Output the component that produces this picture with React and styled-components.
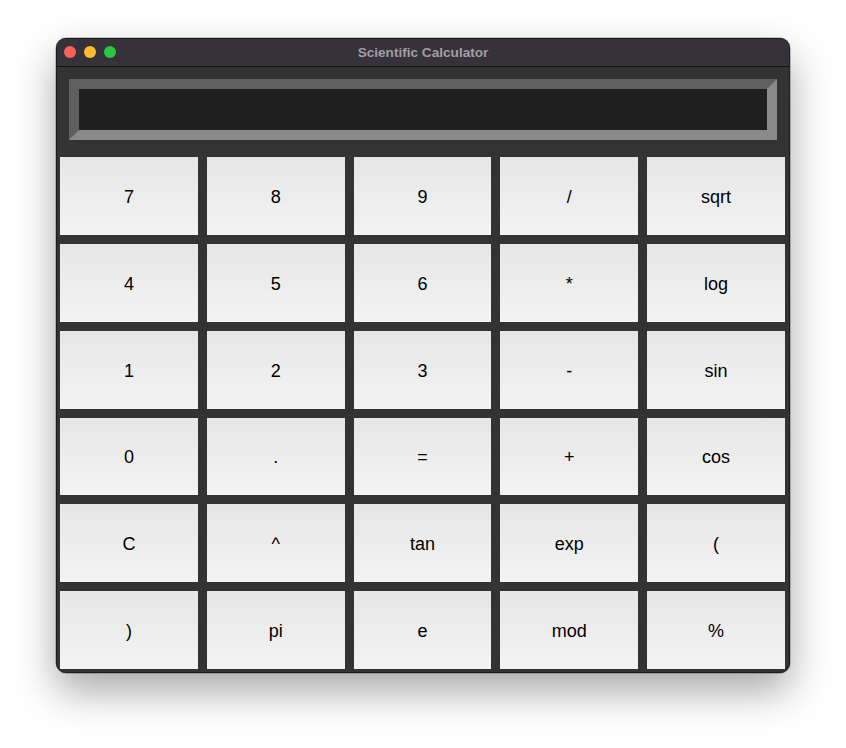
import React from "react";
import styled, { createGlobalStyle } from "styled-components";

const Global = createGlobalStyle`
  html, body { margin: 0; padding: 0; background: #ffffff; }
  body { font-family: "Liberation Sans", Arial, sans-serif; }
`;

const Stage = styled.div`
  padding: 38px 0 0 56px;
  width: 846px;
  height: 748px;
  box-sizing: border-box;
  background: #ffffff;
`;

const Window = styled.div`
  width: 734px;
  height: 635px;
  box-sizing: border-box;
  border-radius: 10px;
  background: #333333;
  border: 1px solid #1c1c1c;
  overflow: hidden;
  display: flex;
  flex-direction: column;
  box-shadow: 0 18px 40px rgba(0, 0, 0, 0.35), 0 0 0 0.5px rgba(0,0,0,0.4);
`;

const TitleBar = styled.div`
  height: 27px;
  flex: none;
  background: #37313a;
  border-bottom: 1px solid #111;
  position: relative;
  display: flex;
  align-items: center;
  justify-content: center;
`;

const Lights = styled.div`
  position: absolute;
  left: 7px;
  top: 7px;
  display: flex;
  gap: 8px;
`;

const Light = styled.span`
  width: 12px;
  height: 12px;
  border-radius: 50%;
  background: ${(p) => p.$c};
`;

const Title = styled.div`
  font-family: "Liberation Sans", Arial, sans-serif;
  font-weight: bold;
  font-size: 13.6px;
  color: #a29ea7;
`;

const Body = styled.div`
  flex: 1;
  display: flex;
  flex-direction: column;
  padding: 12px 4px 3px 3px;
`;

const Display = styled.div`
  margin: 0 8px 17px 9px;
  height: 61px;
  box-sizing: border-box;
  border-style: solid;
  border-width: 10px;
  border-color: #5f5f5f #8a8a8a #8a8a8a #5f5f5f;
  background: #1f1f1f;
`;

const Grid = styled.div`
  flex: 1;
  display: grid;
  grid-template-columns: repeat(5, 1fr);
  grid-template-rows: repeat(6, 1fr);
  gap: 9px;
`;

const Key = styled.button`
  border: none;
  margin: 0;
  padding: 3px 0 0;
  background: linear-gradient(#e6e6e6, #f3f3f3);
  font-family: "Liberation Sans", Arial, sans-serif;
  font-size: 18px;
  color: #000;
  display: flex;
  align-items: center;
  justify-content: center;
`;

const keys = [
  "7", "8", "9", "/", "sqrt",
  "4", "5", "6", "*", "log",
  "1", "2", "3", "-", "sin",
  "0", ".", "=", "+", "cos",
  "C", "^", "tan", "exp", "(",
  ")", "pi", "e", "mod", "%",
];

export default function App() {
  return (
    <Stage>
      <Global />
      <Window>
        <TitleBar>
          <Lights>
            <Light $c="#fe5f57" />
            <Light $c="#febc2e" />
            <Light $c="#28c840" />
          </Lights>
          <Title>Scientific Calculator</Title>
        </TitleBar>
        <Body>
          <Display />
          <Grid>
            {keys.map((k) => (
              <Key key={k}>{k}</Key>
            ))}
          </Grid>
        </Body>
      </Window>
    </Stage>
  );
}
